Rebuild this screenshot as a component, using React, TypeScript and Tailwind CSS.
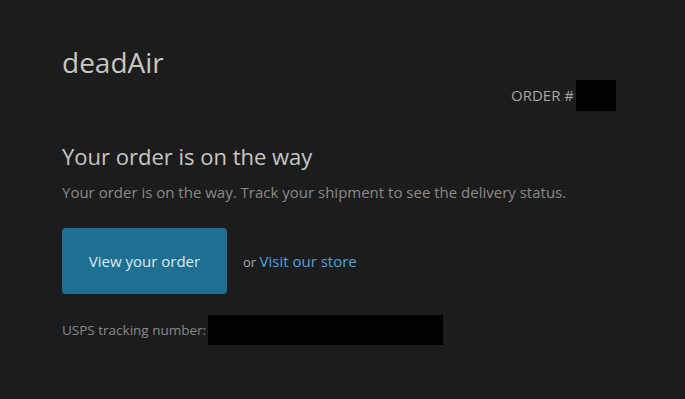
export default function App() {
  return (
    <div className="min-h-[399px] w-full bg-[#1b1c1e]" style={{ fontFamily: '"Open Sans", "Noto Sans", sans-serif' }}>
      <div className="ml-[62px] w-[554px] pt-[42px]">
        <div className="text-[28px] leading-[40px] text-[#c9c6c0]">deadAir</div>
        <div className="flex justify-end items-center mt-[-2px]">
          <span className="text-[15px] text-[#a8a49e] mr-[2px]">ORDER #</span>
          <div className="w-[40px] h-[31px] bg-black"></div>
        </div>
        <div className="mt-[30px] text-[22px] leading-[30px] text-[#c9c6c0]">Your order is on the way</div>
        <div className="mt-[10px] text-[15px] leading-[22px] text-[#8d8a84]">
          Your order is on the way. Track your shipment to see the delivery status.
        </div>
        <div className="mt-[25px] flex items-center">
          <div className="w-[165px] h-[66px] rounded-[4px] bg-[#1f6f93] flex items-center justify-center text-[15px] text-[#dcebf2]">
            View your order
          </div>
          <div className="ml-[16px] text-[15px] text-[#4ea5d0]">
            <span className="text-[13px] text-[#a8a49e]">or </span>Visit our store
          </div>
        </div>
        <div className="mt-[21px] flex items-center">
          <span className="text-[13.5px] text-[#8d8a84]">USPS tracking number: </span>
          <div className="ml-[2px] w-[235px] h-[30px] bg-black"></div>
        </div>
      </div>
    </div>
  );
}
